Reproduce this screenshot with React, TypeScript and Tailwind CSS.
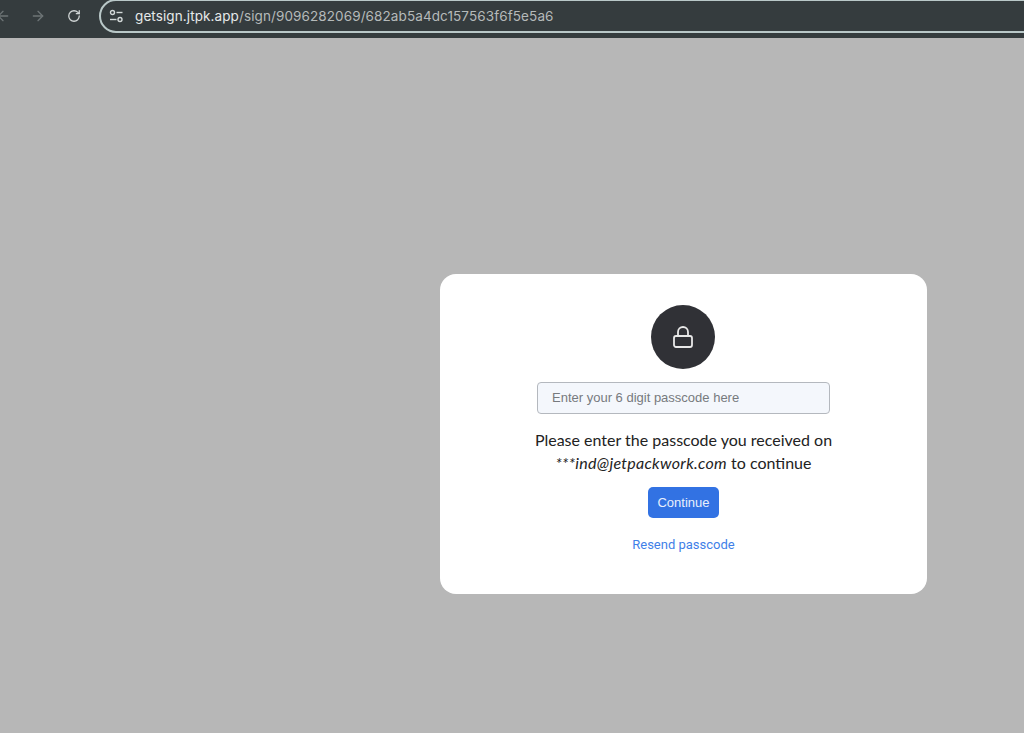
import { ArrowLeft, ArrowRight, RotateCw, Lock } from "lucide-react";

function TuneIcon() {
    return (
        <svg width="15" height="14" viewBox="0 0 15 14" fill="none" stroke="#d3d8d8" strokeWidth="1.4">
            <circle cx="3.5" cy="3.5" r="2" />
            <line x1="7.5" y1="3.5" x2="13.5" y2="3.5" />
            <line x1="1" y1="10.5" x2="7.5" y2="10.5" />
            <circle cx="11" cy="10.5" r="2" />
        </svg>
    );
}

export default function App() {
    return (
        <div className="h-[733px] w-[1024px] overflow-hidden bg-[#b7b7b7] flex flex-col">
            <div className="h-[38px] shrink-0 bg-[#353c3e] flex items-start overflow-hidden">
                <div className="h-[31px] w-[99px] shrink-0 flex items-center text-[#6d7476]">
                    <ArrowLeft className="w-[16px] h-[16px] ml-[-5px] mr-[19px]" />
                    <ArrowRight className="w-[16px] h-[16px] mr-[21px]" />
                    <RotateCw className="w-[14px] h-[14px] text-[#d0d5d5]" strokeWidth={2.2} />
                </div>
                <div className="h-[34px] flex-1 -mt-[1px] -mr-8 flex items-center border-2 border-[#b9c8c8] rounded-l-[17px] pl-[8px]">
                    <TuneIcon />
                    <div className="ml-[11px] text-[13.5px] whitespace-nowrap font-['Inter',sans-serif] text-[#b5baba] tracking-[0.1px]">
                        <span className="text-[#e6e9e9]">getsign.jtpk.app</span>/sign/9096282069/682ab5a4dc157563f6f5e5a6
                    </div>
                </div>
            </div>
            <div className="flex-1 pt-[236px] pl-[440px]">
                <div className="w-[487px] h-[320px] bg-white rounded-[16px] flex flex-col items-center pt-[31px]">
                    <div className="w-[64px] h-[64px] mr-[2px] rounded-full bg-[#303136] flex items-center justify-center">
                        <Lock className="w-[24px] h-[24px] text-[#e8e8e8]" strokeWidth={1.8} />
                    </div>
                    <div className="mt-[13px] w-[293px] h-[32px] rounded-[4px] border border-[#b4b8be] bg-[#f4f7fc] flex items-center pl-[14px] font-['Liberation_Sans',sans-serif] text-[13px] text-[#777a7e]">
                        Enter your 6 digit passcode here
                    </div>
                    <div className="mt-[14px] text-center font-['Lato',sans-serif] text-[16px] leading-[23px] text-[#222222]">
                        <p>Please enter the passcode you received on</p>
                        <p>
                            <em className="tracking-[0.3px]">***ind@jetpackwork.com</em> to continue
                        </p>
                    </div>
                    <button className="mt-[13px] w-[71px] h-[31px] rounded-[5px] bg-[#3272e3] text-[#e8effc] font-['Liberation_Sans',sans-serif] text-[13px]">
                        Continue
                    </button>
                    <a className="mt-[17px] font-['Roboto',sans-serif] text-[13px] text-[#3f7fe8]">Resend passcode</a>
                </div>
            </div>
        </div>
    );
}
